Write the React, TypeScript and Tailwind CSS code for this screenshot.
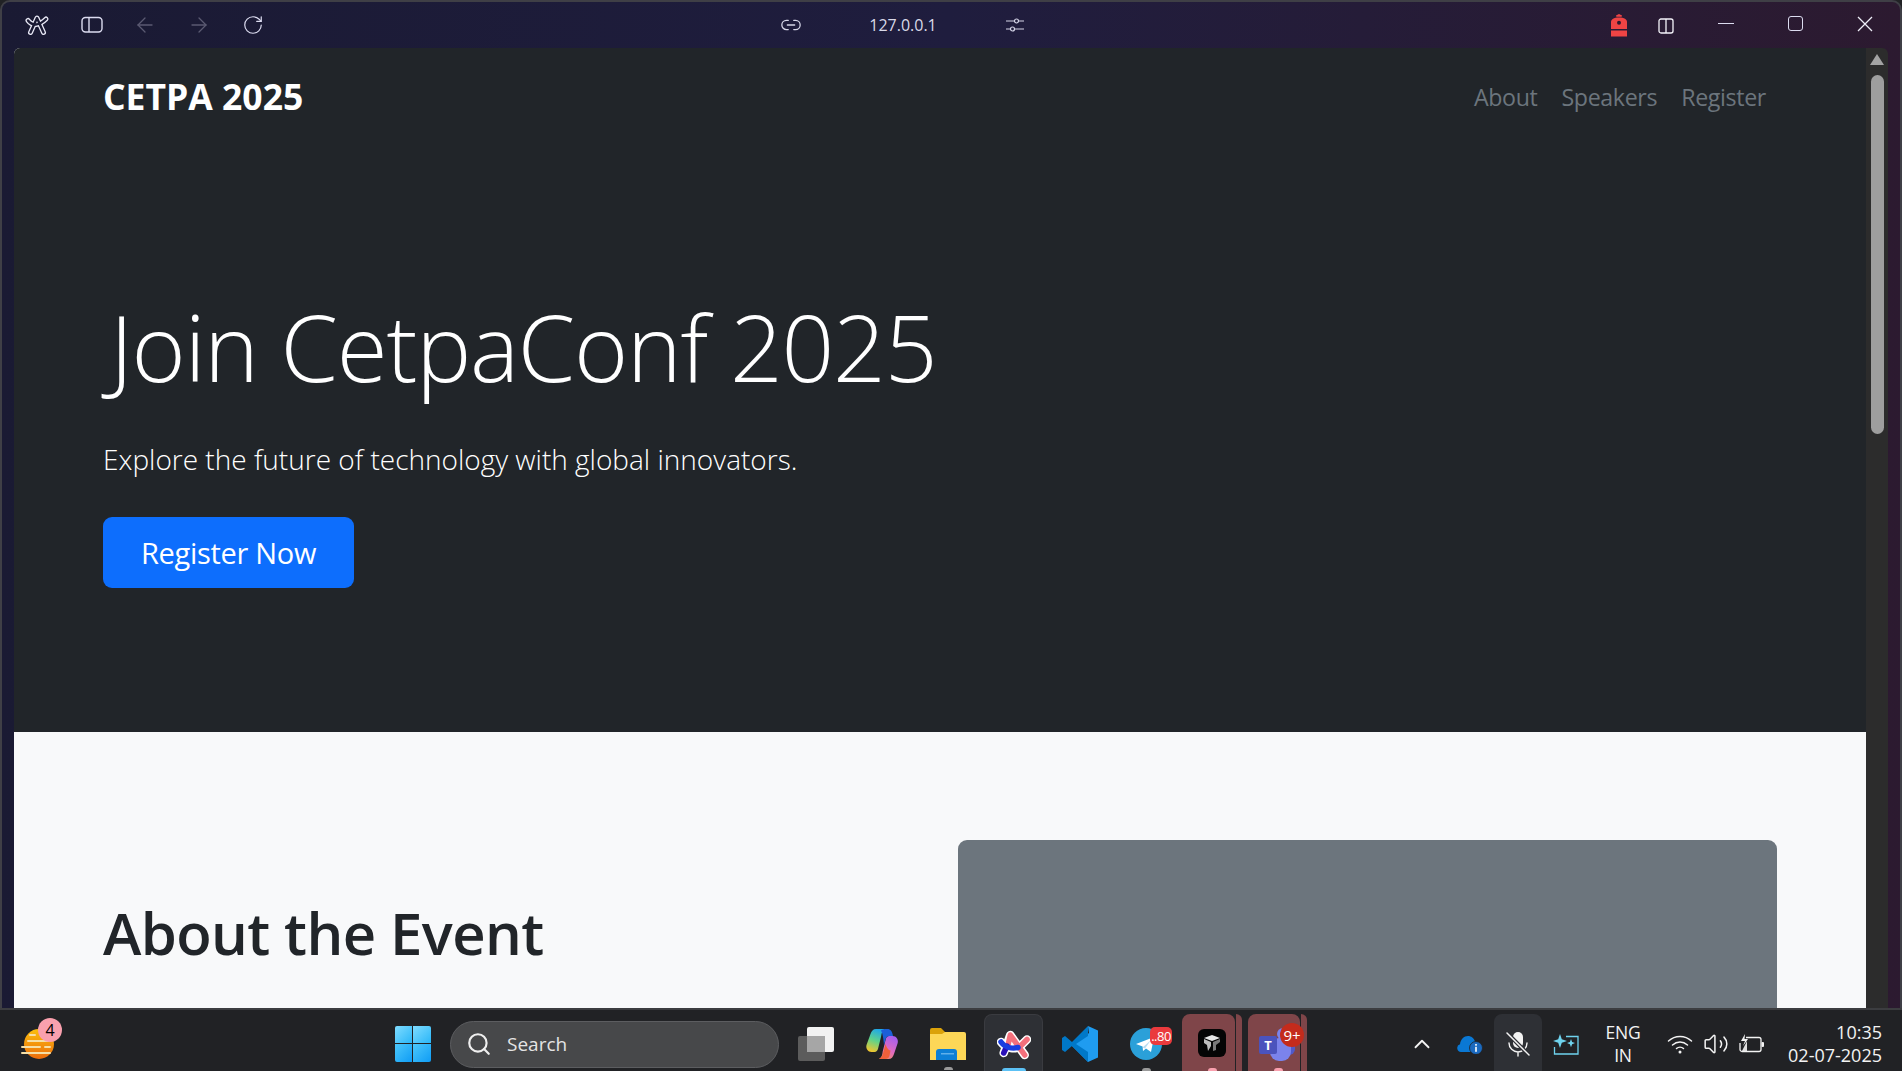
import React from "react";
import { ArrowLeft, ArrowRight, RotateCw, Link2, ChevronUp, Search, Volume2 } from "lucide-react";

const ArcOutline = () => (
  <svg width="26" height="24" viewBox="0 0 26 24" fill="none" strokeLinejoin="round" strokeLinecap="round">
    <g stroke="#e8e8f5" strokeWidth="5">
      <path d="M6.500 19.500 13 5l6.500 14.500" />
      <path d="M4 7.500c4 5.500 11 5.500 18-1.500" />
    </g>
    <g stroke="#1a1a33" strokeWidth="2.400">
      <path d="M6.500 19.500 13 5l6.500 14.500" />
      <path d="M4 7.500c4 5.500 11 5.500 18-1.500" />
    </g>
  </svg>
);

const Sidebar = () => (
  <svg width="22" height="18" viewBox="0 0 22 18" fill="none" stroke="#dcdcf0" strokeWidth="1.400">
    <rect x="1" y="1.500" width="20" height="14.500" rx="3.500" />
    <line x1="8" y1="1.500" x2="8" y2="16" />
  </svg>
);

const Sliders = () => (
  <svg width="18" height="16" viewBox="0 0 18 16" fill="none" stroke="#d6d6e8" strokeWidth="1.200">
    <path d="M0 4h8M13 4h5M0 12h4M9 12h9" />
    <circle cx="10.500" cy="4" r="2" />
    <circle cx="6.500" cy="12" r="2" />
  </svg>
);

const RedBag = () => (
  <svg width="16" height="24" viewBox="1 0 16 24" fill="#ef4444">
    <path d="M6 2.500 9 1l3 1.500-.3 1.300H6.300z" />
    <path d="M1 16v-7c0-2.800 2.600-4.600 8-4.600s8 1.800 8 4.600v7z" />
    <rect x="1" y="17.500" width="16" height="6" />
    <circle cx="9" cy="9.800" r="2" fill="#2a1a30" />
  </svg>
);

const SplitView = () => (
  <svg width="16" height="16" viewBox="0 0 16 16" fill="none" stroke="#f4f4fa" strokeWidth="1.300">
    <rect x="1" y="1" width="14" height="14" rx="2" />
    <line x1="8" y1="1" x2="8" y2="15" />
  </svg>
);

const Weather = () => (
  <svg width="34" height="34" viewBox="0 0 34 34">
    <defs>
      <linearGradient id="sun" x1="0" y1="0" x2="0" y2="1">
        <stop offset="0" stopColor="#fbbf0e" />
        <stop offset="1" stopColor="#ec6c0b" />
      </linearGradient>
    </defs>
    <circle cx="18" cy="17" r="15" fill="url(#sun)" />
    <g stroke="#f6dfa6" strokeWidth="2" strokeLinecap="round">
      <path d="M9 8h5M7 14h20M1 20h18M24 20h5M1 26h28" />
    </g>
  </svg>
);

const WinLogo = () => (
  <svg width="36" height="36" viewBox="0 0 36 36">
    <defs>
      <linearGradient id="w1" x1="0" y1="0" x2="1" y2="1">
        <stop offset="0" stopColor="#7fdcff" />
        <stop offset="1" stopColor="#2ab6f8" />
      </linearGradient>
      <linearGradient id="w2" x1="0" y1="0" x2="1" y2="1">
        <stop offset="0" stopColor="#4cc8fb" />
        <stop offset="1" stopColor="#0f9cf5" />
      </linearGradient>
    </defs>
    <path d="M0 2a2 2 0 0 1 2-2h15v17H0z" fill="url(#w1)" />
    <path d="M18 0h16a2 2 0 0 1 2 2v15H18z" fill="url(#w1)" />
    <path d="M0 18h17v18H2a2 2 0 0 1-2-2z" fill="url(#w2)" />
    <path d="M18 18h18v16a2 2 0 0 1-2 2H18z" fill="url(#w2)" />
  </svg>
);

const TaskView = () => (
  <svg width="36" height="34" viewBox="0 0 36 34">
    <rect x="0" y="9" width="27" height="25" rx="2" fill="#5c5c5c" />
    <rect x="9" y="0" width="27" height="25" rx="2" fill="#f2f2f2" />
    <rect x="9" y="9" width="18" height="16" fill="#a6a6a6" />
  </svg>
);

const Copilot = () => (
  <svg width="34" height="34" viewBox="0 0 34 34">
    <defs>
      <linearGradient id="c1" x1="0.600" y1="0" x2="0.300" y2="1">
        <stop offset="0" stopColor="#1fa8e8" />
        <stop offset="0.500" stopColor="#5fd38a" />
        <stop offset="1" stopColor="#f3c52c" />
      </linearGradient>
      <linearGradient id="c2" x1="0.700" y1="0" x2="0.300" y2="1">
        <stop offset="0" stopColor="#a45ff0" />
        <stop offset="0.600" stopColor="#e06bc0" />
        <stop offset="1" stopColor="#f58a6a" />
      </linearGradient>
    </defs>
    <path d="M20 2H11C8 2 6.500 4 5.500 7L1.500 18c-1 3.500 1.500 7 5 7h3c2 0 3-1.500 3.600-3.500l3-12C16.500 5.500 18 3 20 2z" fill="url(#c1)" />
    <path d="M14 32h9.500c3 0 4.500-2 5.500-5l3.700-11c1-3.500-1.500-7-5-7h-3.500c-2 0-3 1.500-3.500 3.500l-3 12C17.500 28.500 16 31 14 32z" fill="url(#c2)" />
    <path d="M16 3.500C17.500 2.500 19 2 21 2h1.500c3 0 4.800 2.500 5.500 7h-4c-2 0-3 1.500-3.500 3.500L19 18c-.5-5-1-11-3-14.500z" fill="#1c5fd8" />
    <path d="M20.500 17 18 26.500c-.6 2.500-2 4.500-4 5.500h6c3 0 4-1.500 4.500-3.500l1-5c-2 0-4-3-5-6.500z" fill="#f0603a" />
  </svg>
);

const Folder = () => (
  <svg width="36" height="32" viewBox="0 0 36 32">
    <path d="M0 2a2 2 0 0 1 2-2h9l4 4v4H0z" fill="#dba20a" />
    <path d="M0 6h12l3-2h19a2 2 0 0 1 2 2v26H0z" fill="#fdd757" />
    <path d="M6 32v-8a3 3 0 0 1 3-3h15a3 3 0 0 1 3 3v8z" fill="#0c7fd6" />
    <rect x="11" y="25" width="13" height="1.500" fill="#5fb0ea" />
  </svg>
);

const ArcColor = () => (
  <svg width="34" height="30" viewBox="0 0 34 30" fill="none" strokeLinecap="round" strokeLinejoin="round">
    <g stroke="#ffffff" strokeWidth="8.500">
      <path d="M6.700 23 13.300 5l14.400 20" />
      <path d="M4 12c5 7 15 8 20 3.500L30 9.500" />
    </g>
    <path d="M11 15 13.300 5 27.700 25" stroke="#f4707c" strokeWidth="5.500" />
    <path d="M24 15.500 30 9.500" stroke="#f4707c" strokeWidth="5.500" />
    <path d="M6.700 23 10 16" stroke="#2a0fb8" strokeWidth="5.500" />
    <path d="M4 12c4 5.500 11 7 17 5.500" stroke="#1a3ee0" strokeWidth="5.500" />
  </svg>
);

const VSCode = () => (
  <svg width="38" height="38" viewBox="0 0 38 38">
    <path d="M27 1 37 5.500v27L27 37 11 21l17-13z" fill="#1f9cf0" />
    <path d="M27 1 11 17 4 11 1 13v12l3 2 7-6 16 16V27l-12-8 12-8z" fill="#0078c8" />
  </svg>
);

const Telegram = () => (
  <svg width="32" height="32" viewBox="0 0 32 32">
    <circle cx="16" cy="16" r="16" fill="#2ba0d9" />
    <path d="M6 16 24 9l-3 15-5-3.500-3 2.500-.4-4.500z" fill="#fff" />
    <path d="M12.600 19.500 21 12l-6 8.500z" fill="#b8dcf1" />
  </svg>
);

const AppCube = () => (
  <svg width="28" height="28" viewBox="0 0 28 28">
    <rect width="28" height="28" rx="6" fill="#050505" />
    <path d="M14 6l8 3-8 3-8-3z" fill="#e8e8e8" />
    <path d="M6 10l7 3v4l-3 5-1-6-3-2z" fill="#bdbdbd" />
    <path d="M22 10l-7 3v9l3-1v-5l4-3z" fill="#7a7a7a" />
  </svg>
);

const Teams = () => (
  <svg width="36" height="34" viewBox="0 0 36 34">
    <circle cx="24" cy="7" r="6" fill="#7b83eb" />
    <circle cx="32" cy="14" r="4" fill="#5059c9" />
    <rect x="24" y="13" width="12" height="15" rx="6" fill="#5059c9" />
    <rect x="11" y="11" width="21" height="23" rx="9" fill="#7b83eb" />
    <rect x="0" y="9" width="18" height="18" rx="2" fill="#4b53bc" />
    <text x="9" y="23" textAnchor="middle" fontSize="13" fontWeight="700" fill="#fff" fontFamily="Open Sans, sans-serif">T</text>
  </svg>
);

const Cloud = () => (
  <svg width="26" height="20" viewBox="0 0 26 20">
    <path d="M4 18a4 4 0 0 1-1-7.800C3.500 5.500 7 2 11 2c3.200 0 6 2.200 7 5.500 3 .2 5 2.500 5 5.500 0 2-1 5-4 5z" fill="#0a78d4" />
    <circle cx="19" cy="14" r="6.500" fill="#1b6ac0" stroke="#212225" strokeWidth="0.800" />
    <rect x="18.200" y="12.800" width="1.600" height="5" fill="#fff" />
    <rect x="18.200" y="10" width="1.600" height="1.700" fill="#fff" />
  </svg>
);

const MicMuted = () => (
  <svg width="24" height="26" viewBox="0 0 24 26" fill="none" strokeLinecap="round">
    <rect x="7" y="1" width="10" height="16" rx="5" fill="#f3f3f3" />
    <path d="M3 12a9 9 0 0 0 18 0M12 21v4" stroke="#f3f3f3" strokeWidth="1.400" />
    <path d="M1 2 23 24" stroke="#2e3035" strokeWidth="4" />
    <path d="M1 2 23 24" stroke="#f3f3f3" strokeWidth="1.500" />
  </svg>
);

const Sparkle = () => (
  <svg width="26" height="22" viewBox="0 0 26 22" fill="none" stroke="#6fd3ee" strokeWidth="1.300">
    <path d="M13 3.500h12V21H1.500v-7" />
    <path d="M7 1l1.800 5.200L14 8 8.800 9.800 7 15l-1.800-5.200L0 8l5.200-1.800z" fill="#6fd3ee" stroke="none" />
    <path d="M18 6l1.100 3 2.900 1.100-2.900 1.100-1.100 3-1.100-3-2.900-1.100 2.900-1.100z" fill="#6fd3ee" stroke="none" />
  </svg>
);

const Wifi = () => (
  <svg width="26" height="20" viewBox="0 0 26 20" fill="none" stroke="#f3f3f3" strokeWidth="1.500" strokeLinecap="round">
    <path d="M1.500 7C8 1 18 1 24.500 7" />
    <path d="M5.500 11c4.500-4 10.500-4 15 0" />
    <path d="M9.500 14.500c2-1.800 5-1.800 7 0" />
    <circle cx="13" cy="18" r="1.500" fill="#f3f3f3" stroke="none" />
  </svg>
);

const Battery = () => (
  <svg width="26" height="20" viewBox="0 0 26 20" fill="none" stroke="#f3f3f3" strokeWidth="1.300">
    <path d="M7 3.500h13a2 2 0 0 1 2 2v10a2 2 0 0 1-2 2H3a2 2 0 0 1-2-2V9" />
    <rect x="22.500" y="8" width="2.500" height="5" rx="1" fill="#f3f3f3" stroke="none" />
    <path d="M6 0 2 7h4l-2 5 5-7H5.500z" fill="#f3f3f3" stroke="none" />
    <path d="M3 17h5V7z" fill="#f3f3f3" stroke="none" opacity="0.900" />
  </svg>
);

export default function App() {
  return (
    <div className="flex h-screen w-full flex-col overflow-hidden bg-[#212225] font-['Open_Sans','Noto_Sans',sans-serif]">
      <div className="flex min-h-0 flex-1 flex-col rounded-t-[10px] border-x-2 border-t-2 border-[#3f3f46] bg-gradient-to-r from-[#1a1a33] via-[#1f1d3e] to-[#2c1a30]">
        {/* title bar */}
        <div className="flex h-[46px] shrink-0 items-center">
          <div className="flex w-[778px] items-center">
            <div className="ml-[22px] flex w-[26px] justify-center"><ArcOutline /></div>
            <div className="ml-[31px] flex w-[22px] justify-center"><Sidebar /></div>
            <ArrowLeft className="ml-[30px]" size={24} strokeWidth={1.300} color="#5b5a72" />
            <ArrowRight className="ml-[30px]" size={24} strokeWidth={1.300} color="#5b5a72" />
            <RotateCw className="ml-[31px]" size={22} strokeWidth={1.300} color="#dcdcf0" />
          </div>
          <div className="flex items-center">
            <Link2 size={22} strokeWidth={1.400} color="#d6d6e8" />
            <span className="ml-[65px] w-[72px] text-center text-[16px] text-[#d9d9e8]">127.0.0.1</span>
            <span className="ml-[67px] flex"><Sliders /></span>
          </div>
          <div className="ml-auto flex items-center">
            <RedBag />
            <span className="ml-[31px] mt-[2px] flex"><SplitView /></span>
            <span className="mb-[3px] ml-[44px] h-[1.500px] w-[16px] bg-[#dcdcf0]" />
            <span className="mb-[3px] ml-[54px] h-[15px] w-[15px] rounded-[3px] border-[1.500px] border-[#dcdcf0]" />
            <svg className="mb-[3px] ml-[54px] mr-[27px]" width="16" height="16" viewBox="0 0 16 16" stroke="#eeeef8" strokeWidth="1.300"><path d="M1 1l14 14M15 1 1 15" /></svg>
          </div>
        </div>

        {/* browser viewport */}
        <div className="flex min-h-0 flex-1 pl-[12px] pr-[12px]">
          <div className="min-w-0 flex-1 overflow-hidden rounded-tl-[6px] bg-[#f8f9fa]">
            <div className="h-[684px] bg-[#212529] pl-[89px] pr-[100px]">
              <div className="flex h-[98px] items-center justify-between">
                <span className="text-[35.500px] font-bold text-white">CETPA 2025</span>
                <nav className="flex gap-[24px] text-[23.200px] tracking-[-0.35px] text-[#6c757d]">
                  <span>About</span>
                  <span>Speakers</span>
                  <span>Register</span>
                </nav>
              </div>
              <h1 className="mt-[147px] pl-[7px] text-[92.500px] font-light leading-[106px] tracking-[-1.200px] text-white">Join CetpaConf 2025</h1>
              <p className="mt-[40px] text-[28px] font-light leading-[40px] text-white">Explore the future of technology with global innovators.</p>
              <button className="mt-[38px] h-[71px] w-[251px] rounded-[9px] bg-[#0d6efd] text-[29px] tracking-[-0.300px] text-white">Register Now</button>
            </div>
            <div className="flex pl-[89px] pr-[89px] pt-[108px]">
              <div className="w-[855px] pt-[58px]">
                <h2 className="text-[58px] font-semibold leading-[70px] tracking-[-0.600px] text-[#212529]">About the Event</h2>
              </div>
              <div className="h-[400px] flex-1 rounded-t-[9px] bg-[#6c757d]" />
            </div>
          </div>
          {/* scrollbar */}
          <div className="flex w-[22px] shrink-0 flex-col items-center rounded-tr-[6px] bg-[#2c2c2c] pt-[6px]">
            <div className="h-0 w-0 border-x-[7.500px] border-b-[11px] border-x-transparent border-b-[#a3a3a3]" />
            <div className="mt-[10px] h-[359px] w-[13px] rounded-full bg-[#9e9e9e]" />
          </div>
        </div>
      </div>

      {/* taskbar */}
      <div className="flex h-[63px] shrink-0 items-center border-t-2 border-[#3c3d40] bg-[#212225] pt-[7px] text-[#f3f3f3]">
        <div className="relative ml-[21px]">
          <Weather />
          <span className="absolute -right-[7px] -top-[9px] flex h-[24px] w-[24px] items-center justify-center rounded-full bg-[#f9a0ae] text-[16px] text-black">4</span>
        </div>
        <div className="ml-[340px] flex"><WinLogo /></div>
        <div className="ml-[19px] flex h-[47px] w-[329px] items-center rounded-full border border-[#5c5d60] bg-[#47484a] pl-[15px]">
          <Search size={26} strokeWidth={2} color="#efefef" />
          <span className="ml-[15px] text-[19px] text-[#e4e4e4]">Search</span>
        </div>
        <div className="ml-[19px] flex"><TaskView /></div>
        <div className="ml-[31px] flex"><Copilot /></div>
        <div className="relative ml-[31px] flex">
          <Folder />
          <span className="absolute -bottom-[10px] left-[14px] h-[3px] w-[9px] rounded-t-full bg-[#9a9a9a]" />
        </div>
        <div className="relative ml-[18px] flex h-[57px] w-[59px] items-center justify-center self-end rounded-t-[8px] border border-b-0 border-[#3a3b40] bg-[#2e3035] pt-[3px]">
          <ArcColor />
          <span className="absolute bottom-0 left-[17px] h-[3px] w-[24px] rounded-t-full bg-[#5cc1f5]" />
        </div>
        <div className="ml-[18px] flex"><VSCode /></div>
        <div className="relative ml-[31px] flex">
          <Telegram />
          <span className="absolute -right-[10px] -top-[1px] flex h-[18px] w-[22px] items-center justify-center rounded-[5px] bg-[#ea3a3d] text-[13px] leading-none tracking-[-0.5px] text-white">..80</span>
          <span className="absolute -bottom-[11px] left-[12px] h-[3px] w-[9px] rounded-t-full bg-[#9a9a9a]" />
        </div>
        <div className="relative ml-[20px] flex h-[57px] w-[53px] items-center justify-center self-end rounded-t-[8px] bg-[#7f4549] pl-[6px] pt-[1px]">
          <AppCube />
          <span className="absolute bottom-0 left-[26px] h-[3px] w-[9px] rounded-t-full bg-[#f9a0ae]" />
        </div>
        <div className="ml-[1px] h-[57px] w-[6px] self-end rounded-tr-[8px] bg-[#7f4549]" />
        <div className="relative ml-[6px] flex h-[57px] w-[52px] items-center justify-center self-end rounded-t-[8px] bg-[#7f4549] pl-[6px] pt-[3px]">
          <Teams />
          <span className="absolute -right-[4px] top-[9px] flex h-[24px] w-[24px] items-center justify-center rounded-full bg-[#c42b1c] text-[15px] leading-none text-white">9+</span>
          <span className="absolute bottom-0 left-[26px] h-[3px] w-[9px] rounded-t-full bg-[#f9a0ae]" />
        </div>
        <div className="ml-[1px] h-[57px] w-[6px] self-end rounded-tr-[8px] bg-[#7f4549]" />

        <div className="ml-auto flex h-full items-center pr-[20px]">
          <ChevronUp size={26} strokeWidth={1.700} color="#f3f3f3" />
          <div className="ml-[22px] flex"><Cloud /></div>
          <div className="ml-[11px] flex h-[57px] w-[48px] items-center justify-center self-end rounded-t-[8px] bg-[#2e3035] pt-[3px]">
            <MicMuted />
          </div>
          <div className="ml-[11px] flex"><Sparkle /></div>
          <div className="ml-[26px] w-[36px] text-center text-[17.500px] leading-[23px] tracking-[-0.200px]">ENG<br />IN</div>
          <div className="ml-[26px] flex"><Wifi /></div>
          <Volume2 className="ml-[10px]" size={26} strokeWidth={1.400} color="#f3f3f3" />
          <div className="ml-[10px] flex"><Battery /></div>
          <div className="ml-[21px] w-[96px] text-right text-[18px] leading-[23px]">10:35<br />02-07-2025</div>
        </div>
      </div>
    </div>
  );
}
